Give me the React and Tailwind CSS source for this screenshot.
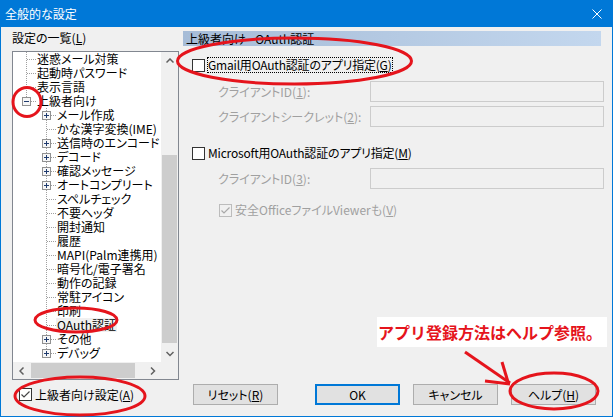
import React from "react";

const RED = "#e5141c";

const tree = [
  { label: "迷惑メール対策", level: 1 },
  { label: "起動時パスワード", level: 1 },
  { label: "表示言語", level: 1 },
  { label: "上級者向け", level: 1, box: "minus", last: true },
  { label: "メール作成", level: 2, box: "plus" },
  { label: "かな漢字変換(IME)", level: 2 },
  { label: "送信時のエンコード", level: 2, box: "plus" },
  { label: "デコード", level: 2, box: "plus" },
  { label: "確認メッセージ", level: 2, box: "plus" },
  { label: "オートコンプリート", level: 2, box: "plus" },
  { label: "スペルチェック", level: 2 },
  { label: "不要ヘッダ", level: 2 },
  { label: "開封通知", level: 2 },
  { label: "履歴", level: 2 },
  { label: "MAPI(Palm連携用)", level: 2 },
  { label: "暗号化/電子署名", level: 2 },
  { label: "動作の記録", level: 2 },
  { label: "常駐アイコン", level: 2 },
  { label: "印刷", level: 2 },
  { label: "OAuth認証", level: 2, selected: true },
  { label: "その他", level: 2, box: "plus" },
  { label: "デバッグ", level: 2, box: "plus", last: true },
];

function Chevron({ dir }) {
  const vertical = dir === "up" || dir === "down";
  const pts = {
    up: "0.5,4.5 4,1 7.5,4.5",
    down: "0.5,1 4,4.5 7.5,1",
    left: "4.5,0.5 1,4 4.5,7.5",
    right: "1,0.5 4.5,4 1,7.5",
  }[dir];
  return (
    <svg width={vertical ? 8 : 6} height={vertical ? 6 : 8}>
      <polyline points={pts} fill="none" stroke="#606060" strokeWidth="1.5" />
    </svg>
  );
}

// dotted tree lines + expander box
function Gutter({ level, box, last }) {
  const w = level === 1 ? 23 : 43;
  const x = level === 1 ? 13.5 : 33.5;
  return (
    <svg width={w} height="14" className="shrink-0">
      <line x1={x} y1="0" x2={x} y2={last ? 8 : 14} stroke="#a0a0a0" strokeDasharray="1 1" />
      <line x1={x + 0.5} y1="7.5" x2={w} y2="7.5" stroke="#a0a0a0" strokeDasharray="1 1" />
      {box && (
        <g>
          <rect x={x - 4} y="3.5" width="8" height="8" fill="#f6f6f6" stroke="#919191" />
          <line x1={x - 2.5} y1="7.5" x2={x + 2.5} y2="7.5" stroke="#1f3b6e" />
          {box === "plus" && <line x1={x} y1="5" x2={x} y2="10" stroke="#1f3b6e" />}
        </g>
      )}
    </svg>
  );
}

function Check({ checked, disabled }) {
  const c = disabled ? "#bcbcbc" : "#333333";
  return (
    <svg width="13" height="13" className="shrink-0">
      <rect x="0.5" y="0.5" width="12" height="12" fill={disabled ? "none" : "#ffffff"} stroke={c} />
      {checked && (
        <polyline points="2.5,6.5 5,9 10.5,3.5" fill="none" stroke={disabled ? "#a8a8a8" : "#444444"} strokeWidth="1.2" />
      )}
    </svg>
  );
}

function Field({ className, children }) {
  return (
    <div className={`flex h-[21px] items-center ${className}`}>
      <div className="w-[187px] shrink-0 pl-[35px] text-[#a0a0a0]">{children}</div>
      <div className="h-[21px] w-[235px] border border-[#cccccc] bg-[#f0f0f0]" />
    </div>
  );
}

function Button({ children, primary, className = "" }) {
  return (
    <div
      className={`flex h-[21px] w-[85px] items-center justify-center bg-[#e1e1e1] ${
        primary ? "border-2 border-[#0078d7]" : "border border-[#adadad]"
      } ${className}`}
    >
      {children}
    </div>
  );
}

function TreeBox() {
  return (
    <div className="mt-[6px] grid h-[329px] grid-cols-[148px_17px] grid-rows-[310px_17px] border border-[#828790] bg-white">
      <div className="flex flex-col overflow-hidden">
        {tree.map((row) => (
          <div key={row.label} className="flex h-[14px] items-center whitespace-nowrap">
            <Gutter level={row.level} box={row.box} last={row.last} />
            <span className={`px-[1px] ${row.selected ? "bg-[#f0f0f0]" : ""}`}>{row.label}</span>
          </div>
        ))}
      </div>
      <div className="flex flex-col bg-[#f0f0f0]">
        <div className="flex h-[17px] items-center justify-center">
          <Chevron dir="up" />
        </div>
        <div className="flex-1">
          <div className="mx-[1px] mt-[86px] h-[188px] bg-[#cdcdcd]" />
        </div>
        <div className="flex h-[17px] items-center justify-center">
          <Chevron dir="down" />
        </div>
      </div>
      <div className="flex bg-[#f0f0f0]">
        <div className="flex w-[17px] items-center justify-center">
          <Chevron dir="left" />
        </div>
        <div className="my-[1px] ml-[1px] w-[104px] bg-[#cdcdcd]" />
        <div className="flex-1" />
        <div className="flex w-[17px] items-center justify-center">
          <Chevron dir="right" />
        </div>
      </div>
      <div className="bg-[#f0f0f0]" />
    </div>
  );
}

function OAuthPanel() {
  return (
    <div className="ml-[4px] flex w-[421px] flex-col">
      <div className="h-[15px] w-[418px] bg-linear-to-r from-[#a6bcd7] to-[#c3d7ee] pl-[3px] leading-[15px]">
        上級者向け - OAuth認証
      </div>
      <div className="mt-[11px] flex h-[16px] items-center pl-[9px]">
        <Check />
        <span className="ml-[2px] border border-dotted border-black leading-[14px] tracking-[-0.2px]">
          Gmail用OAuth認証のアプリ指定(<u>G</u>)
        </span>
      </div>
      <Field className="mt-[8px]">
        クライアントID(<u>1</u>):
      </Field>
      <Field className="mt-[4px]">
        クライアントシークレット(<u>2</u>):
      </Field>
      <div className="mt-[18px] flex h-[16px] items-center pl-[9px]">
        <Check />
        <span className="ml-[2px] border border-transparent leading-[14px] tracking-[-0.2px]">
          Microsoft用OAuth認証のアプリ指定(<u>M</u>)
        </span>
      </div>
      <Field className="mt-[7px]">
        クライアントID(<u>3</u>):
      </Field>
      <div className="mt-[13px] flex h-[16px] items-center pl-[36px] text-[#a0a0a0]">
        <Check checked disabled />
        <span className="ml-[3px]">
          安全OfficeファイルViewerも(<u>V</u>)
        </span>
      </div>
    </div>
  );
}

function Marks() {
  return (
    <svg width="613" height="417" className="pointer-events-none absolute left-0 top-0">
      <g fill="none" stroke={RED} strokeWidth="3">
        <ellipse cx="294.5" cy="61" rx="117" ry="23" />
        <ellipse cx="27" cy="102" rx="14" ry="14.5" />
        <ellipse cx="76" cy="320" rx="41" ry="12" />
        <ellipse cx="80" cy="396" rx="65" ry="19" />
        <ellipse cx="554" cy="391" rx="44" ry="18" />
        <line x1="465" y1="352" x2="510" y2="383" />
        <line x1="502" y1="362" x2="508" y2="382" />
        <line x1="485" y1="381" x2="510" y2="384" />
      </g>
    </svg>
  );
}

export default function App() {
  return (
    <div className="relative flex h-[417px] w-[613px] flex-col overflow-hidden font-['Noto_Sans_CJK_JP',sans-serif] text-[12px] leading-[14px] text-black [font-feature-settings:'palt']">
      <div className="flex h-[27px] shrink-0 items-center justify-between bg-[#0078d7] pl-[5px] pr-[11px] text-white">
        <span>全般的な設定</span>
        <svg width="10" height="10">
          <path d="M0.5 0.5L9.5 9.5M9.5 0.5L0.5 9.5" stroke="#ffffff" />
        </svg>
      </div>

      <div className="flex flex-1 flex-col border-x border-b border-[#0078d7] bg-[#f0f0f0]">
        <div className="flex pl-[11px] pt-[4px]">
          <div className="flex w-[167px] shrink-0 flex-col">
            <div className="h-[14px]">
              設定の一覧(<u>L</u>)
            </div>
            <TreeBox />
          </div>
          <OAuthPanel />
        </div>

        <div className="mt-[4px] flex h-[21px] items-center">
          <div className="flex w-[192px] shrink-0 items-center pl-[18px]">
            <Check checked />
            <span className="ml-[3px]">
              上級者向け設定(<u>A</u>)
            </span>
          </div>
          <Button>
            リセット(<u>R</u>)
          </Button>
          <Button primary className="ml-[37px]">
            OK
          </Button>
          <Button className="ml-[13px]">キャンセル</Button>
          <Button className="ml-[13px]">
            ヘルプ(<u>H</u>)
          </Button>
        </div>
      </div>

      <div className="absolute left-[377px] top-[317px] flex h-[30px] w-[230px] items-center bg-white pl-[1px] text-[16px] font-bold text-[#e5141c] [font-feature-settings:normal]">
        アプリ登録方法はヘルプ参照。
      </div>

      <Marks />
    </div>
  );
}
